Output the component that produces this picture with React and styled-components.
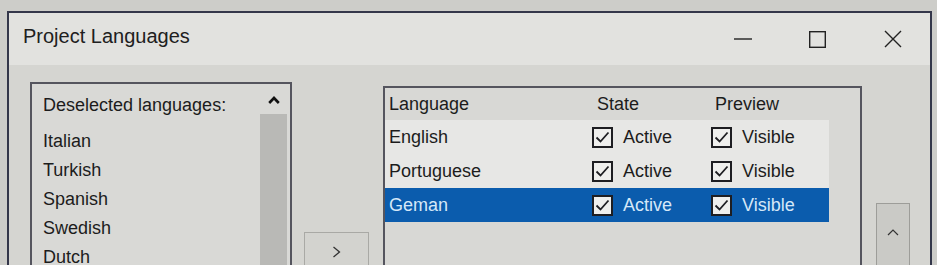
import React from "react";
import styled, { createGlobalStyle } from "styled-components";

const Global = createGlobalStyle`
  html, body { margin: 0; padding: 0; background: #cdcdc9; }
  body { font-family: "Liberation Sans", Arial, sans-serif; color: #1c1c1c; }
`;

const Screen = styled.div`
  width: 937px;
  height: 265px;
  overflow: hidden;
  box-sizing: border-box;
  padding: 11px 0 0 7px;
  background: #cdcdc9;
`;

const Window = styled.div`
  width: 925px;
  height: 300px;
  box-sizing: border-box;
  border: 2px solid #34374a;
  background: #d5d5d1;
  display: flex;
  flex-direction: column;
`;

const TitleBar = styled.div`
  height: 52px;
  flex: none;
  background: #e2e2df;
  display: flex;
  align-items: flex-start;
`;

const Title = styled.div`
  font-size: 20px;
  line-height: 24px;
  padding: 11px 0 0 14px;
  color: #202020;
`;

const Controls = styled.div`
  margin-left: auto;
  display: flex;
  height: 100%;
`;

const CtrlButton = styled.div`
  width: 75px;
  height: 100%;
  display: flex;
  align-items: center;
  justify-content: center;
`;

const Body = styled.div`
  flex: 1;
  display: flex;
  align-items: flex-start;
  padding: 17px 0 0 21px;
`;

const LeftList = styled.div`
  width: 262px;
  height: 220px;
  box-sizing: border-box;
  border: 2px solid #55555e;
  background: #d9d9d6;
  display: flex;
`;

const ListContent = styled.div`
  flex: 1;
  padding: 10px 0 0 11px;
  font-size: 18px;
`;

const ListHeader = styled.div`
  line-height: 22px;
  margin-bottom: 11px;
`;

const ListItem = styled.div`
  line-height: 29px;
`;

const ScrollBar = styled.div`
  width: 27px;
  margin-right: 3px;
  display: flex;
  flex-direction: column;
`;

const ScrollArrow = styled.div`
  height: 28px;
  display: flex;
  align-items: center;
  justify-content: center;
  padding-top: 2px;
`;

const ScrollThumb = styled.div`
  flex: 1;
  background: #b9b9b6;
`;

const MoveButton = styled.div`
  margin: 150px 0 0 12px;
  width: 65px;
  height: 60px;
  box-sizing: border-box;
  border: 1px solid #a9a9a5;
  background: #d3d3cf;
  display: flex;
  justify-content: center;
  padding-top: 13px;
`;

const Table = styled.div`
  margin: 4px 0 0 14px;
  width: 479px;
  height: 200px;
  box-sizing: border-box;
  border: 2px solid #55555e;
  background: #d8d8d5;
  font-size: 18px;
`;

const Row = styled.div`
  width: 444px;
  height: ${(p) => (p.$header ? 32 : 34)}px;
  display: grid;
  grid-template-columns: 203px 119px 1fr;
  align-items: center;
  padding-left: 4px;
  box-sizing: border-box;
  background: ${(p) => (p.$header ? "transparent" : p.$selected ? "#0b5cad" : "#e7e7e5")};
  color: ${(p) => (p.$selected ? "#d6e8f8" : "#1c1c1c")};
`;

const HeadCell = styled.div`
  padding-left: ${(p) => p.$pad || 0}px;
`;

const CheckCell = styled.div`
  display: flex;
  align-items: center;
  gap: 10px;
`;

const Box = styled.div`
  width: 21px;
  height: 21px;
  box-sizing: border-box;
  border: 2px solid #1e1e22;
  background: #efefed;
  display: flex;
  align-items: center;
  justify-content: center;
`;

const SideButton = styled.div`
  margin: 121px 0 0 14px;
  width: 34px;
  height: 80px;
  box-sizing: border-box;
  border: 1px solid #9d9d99;
  background: #cacac6;
  display: flex;
  justify-content: center;
  padding-top: 25px;
`;

const Check = () => (
  <svg width="17" height="17" viewBox="0 0 17 17">
    <path d="M2.5 8.5 L6.5 12.5 L14.5 3.5" fill="none" stroke="#1e1e22" strokeWidth="1.8" />
  </svg>
);

const CheckLabel = ({ label }) => (
  <CheckCell>
    <Box>
      <Check />
    </Box>
    <span>{label}</span>
  </CheckCell>
);

const rows = ["English", "Portuguese", "Geman"];

export default function App() {
  return (
    <>
      <Global />
      <Screen>
        <Window>
          <TitleBar>
            <Title>Project Languages</Title>
            <Controls>
              <CtrlButton>
                <svg width="18" height="2" viewBox="0 0 18 2">
                  <line x1="0" y1="1" x2="18" y2="1" stroke="#222" strokeWidth="1.4" />
                </svg>
              </CtrlButton>
              <CtrlButton>
                <svg width="17" height="17" viewBox="0 0 17 17">
                  <rect x="0.7" y="0.7" width="15.6" height="15.6" fill="none" stroke="#222" strokeWidth="1.4" />
                </svg>
              </CtrlButton>
              <CtrlButton>
                <svg width="18" height="18" viewBox="0 0 18 18">
                  <path d="M1 1 L17 17 M17 1 L1 17" stroke="#222" strokeWidth="1.4" />
                </svg>
              </CtrlButton>
            </Controls>
          </TitleBar>
          <Body>
            <LeftList>
              <ListContent>
                <ListHeader>Deselected languages:</ListHeader>
                {["Italian", "Turkish", "Spanish", "Swedish", "Dutch", "French"].map((l) => (
                  <ListItem key={l}>{l}</ListItem>
                ))}
              </ListContent>
              <ScrollBar>
                <ScrollArrow>
                  <svg width="12" height="8" viewBox="0 0 12 8">
                    <path d="M1.2 7 L6 2 L10.8 7" fill="none" stroke="#111" strokeWidth="2.6" />
                  </svg>
                </ScrollArrow>
                <ScrollThumb />
              </ScrollBar>
            </LeftList>
            <MoveButton>
              <svg width="9" height="12" viewBox="0 0 9 12">
                <path d="M1.5 1 L7.5 6 L1.5 11" fill="none" stroke="#333" strokeWidth="1.3" />
              </svg>
            </MoveButton>
            <Table>
              <Row $header>
                <HeadCell>Language</HeadCell>
                <HeadCell $pad={5}>State</HeadCell>
                <HeadCell $pad={4}>Preview</HeadCell>
              </Row>
              {rows.map((r, i) => (
                <Row key={r} $selected={i === 2}>
                  <span>{r}</span>
                  <CheckLabel label="Active" />
                  <CheckLabel label="Visible" />
                </Row>
              ))}
            </Table>
            <SideButton>
              <svg width="12" height="7" viewBox="0 0 12 7">
                <path d="M1 6 L6 1 L11 6" fill="none" stroke="#333" strokeWidth="1.2" />
              </svg>
            </SideButton>
          </Body>
        </Window>
      </Screen>
    </>
  );
}
